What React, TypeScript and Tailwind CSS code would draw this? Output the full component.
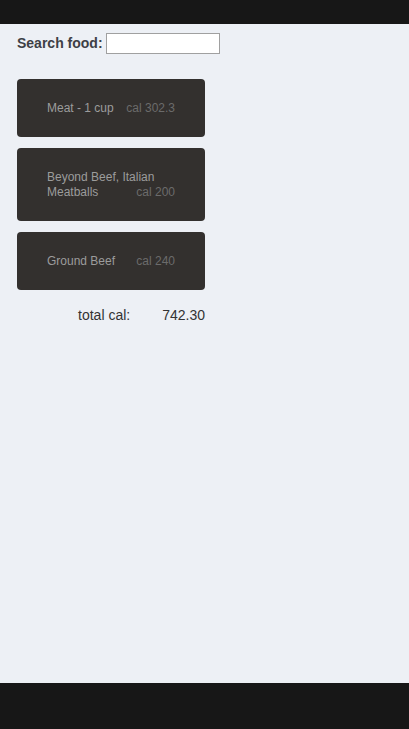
import React from "react";

const foods = [
  { name: "Meat - 1 cup", cal: "302.3" },
  { name: "Beyond Beef, Italian Meatballs", cal: "200" },
  { name: "Ground Beef", cal: "240" },
];

export default function App() {
  return (
    <div className="flex flex-col h-[729px] w-[409px] font-['Liberation_Sans',Arial,sans-serif]">
      <div className="h-[24px] shrink-0 bg-[#171717]" />
      <div className="h-[659px] shrink-0 bg-[#edf0f5] pl-[17px]">
        <div className="mt-[9px] flex items-center">
          <label className="pb-[2px] text-[14px] font-bold text-[#3d3f45] leading-[16px]">Search food:</label>
          <input className="ml-[3px] h-[21px] w-[114px] border border-[#a0a0a0] bg-white outline-none" />
        </div>
        <div className="mt-[25px] flex flex-col gap-[11px]">
          {foods.map((f) => (
            <div key={f.name} className="w-[188px] rounded-[4px] bg-[#33302e] px-[30px] py-[21.5px]">
              <div className="flow-root text-[12px] leading-[15px] text-[#9c9c9c]">
                {f.name}{" "}
                <span className="float-right text-[#6b6b6b]">cal {f.cal}</span>
              </div>
            </div>
          ))}
        </div>
        <div className="mt-[17px] flex w-[188px] justify-end gap-[32px] text-[14px] leading-[16px] text-[#333333]">
          <span>total cal:</span>
          <span>742.30</span>
        </div>
      </div>
      <div className="flex-1 bg-[#171717]" />
    </div>
  );
}
